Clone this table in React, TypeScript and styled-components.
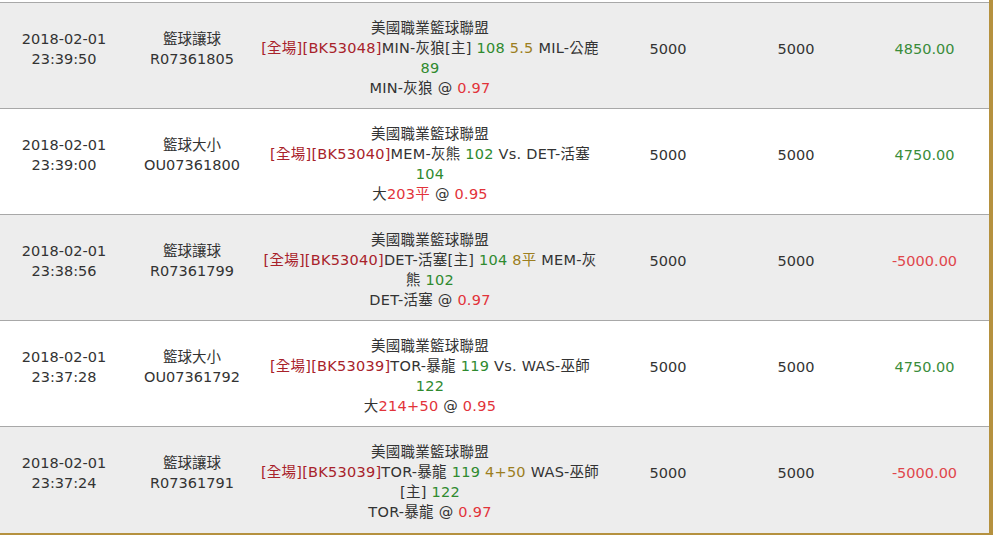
import React from "react";
import styled, { createGlobalStyle } from "styled-components";

const Global = createGlobalStyle`
  html, body { margin: 0; padding: 0; background: #fff; }
  body { font-family: "DejaVu Sans", "Noto Sans CJK TC", sans-serif; }
`;

const Frame = styled.div`
  width: 989px;
  padding-top: 2px;
  border-right: 4px solid #b5913f;
  border-bottom: 3px solid #b5913f;
  background: #fff;
`;

const Table = styled.table`
  width: 989px;
  border-collapse: collapse;
  table-layout: fixed;
  border-top: 1px solid #a8a8a8;
`;

const Row = styled.tr<{ $alt: boolean }>`
  background: ${(p) => (p.$alt ? "#ededed" : "#ffffff")};
  border-top: 1px solid #a8a8a8;
  &:first-child { border-top: none; }
`;

const Cell = styled.td<{ $trail?: boolean; $wide?: boolean }>`
  box-sizing: border-box;
  height: 106px;
  padding: ${(p) => (p.$trail ? "4px 0 18px" : "4px 0 0")};
  text-align: center;
  vertical-align: middle;
  font-size: 14.5px;
  line-height: 20px;
  letter-spacing: ${(p) => (p.$wide ? "0.25px" : "0")};
  color: #333;
  white-space: nowrap;
`;

const Line = styled.div`
  white-space: nowrap;
`;

type Tone = "dark" | "red" | "green" | "olive" | "plain";
const toneColor: Record<Tone, string> = {
  plain: "#333333",
  dark: "#a8222a",
  red: "#e2333a",
  green: "#2f8a2f",
  olive: "#9c7e20",
};

const Tint = styled.span<{ $tone: Tone }>`
  color: ${(p) => toneColor[p.$tone]};
`;

const Amount = styled.span<{ $neg: boolean }>`
  color: ${(p) => (p.$neg ? "#e0464b" : "#3a8c3a")};
`;

type Seg = [Tone, string];
type Bet = {
  date: string;
  time: string;
  kind: string;
  code: string;
  lines: Seg[][];
  stake: string;
  valid: string;
  result: string;
};

const league: Seg[] = [["plain", "美國職業籃球聯盟"]];

const bets: Bet[] = [
  {
    date: "2018-02-01",
    time: "23:39:50",
    kind: "籃球讓球",
    code: "R07361805",
    lines: [
      league,
      [["dark", "[全場][BK53048]"], ["plain", "MIN-灰狼[主] "], ["green", "108"], ["plain", " "], ["olive", "5.5"], ["plain", " MIL-公鹿"]],
      [["green", "89"]],
      [["plain", "MIN-灰狼 @ "], ["red", "0.97"]],
    ],
    stake: "5000",
    valid: "5000",
    result: "4850.00",
  },
  {
    date: "2018-02-01",
    time: "23:39:00",
    kind: "籃球大小",
    code: "OU07361800",
    lines: [
      league,
      [["dark", "[全場][BK53040]"], ["plain", "MEM-灰熊 "], ["green", "102"], ["plain", " Vs. DET-活塞"]],
      [["green", "104"]],
      [["plain", "大"], ["red", "203平"], ["plain", " @ "], ["red", "0.95"]],
    ],
    stake: "5000",
    valid: "5000",
    result: "4750.00",
  },
  {
    date: "2018-02-01",
    time: "23:38:56",
    kind: "籃球讓球",
    code: "R07361799",
    lines: [
      league,
      [["dark", "[全場][BK53040]"], ["plain", "DET-活塞[主] "], ["green", "104"], ["plain", " "], ["olive", "8平"], ["plain", " MEM-灰"]],
      [["plain", "熊 "], ["green", "102"]],
      [["plain", "DET-活塞 @ "], ["red", "0.97"]],
    ],
    stake: "5000",
    valid: "5000",
    result: "-5000.00",
  },
  {
    date: "2018-02-01",
    time: "23:37:28",
    kind: "籃球大小",
    code: "OU07361792",
    lines: [
      league,
      [["dark", "[全場][BK53039]"], ["plain", "TOR-暴龍 "], ["green", "119"], ["plain", " Vs. WAS-巫師"]],
      [["green", "122"]],
      [["plain", "大"], ["red", "214+50"], ["plain", " @ "], ["red", "0.95"]],
    ],
    stake: "5000",
    valid: "5000",
    result: "4750.00",
  },
  {
    date: "2018-02-01",
    time: "23:37:24",
    kind: "籃球讓球",
    code: "R07361791",
    lines: [
      league,
      [["dark", "[全場][BK53039]"], ["plain", "TOR-暴龍 "], ["green", "119"], ["plain", " "], ["olive", "4+50"], ["plain", " WAS-巫師"]],
      [["plain", "[主] "], ["green", "122"]],
      [["plain", "TOR-暴龍 @ "], ["red", "0.97"]],
    ],
    stake: "5000",
    valid: "5000",
    result: "-5000.00",
  },
];

export default function App() {
  return (
    <>
      <Global />
      <Frame>
        <Table>
          <colgroup>
            <col style={{ width: 128 }} />
            <col style={{ width: 128 }} />
            <col style={{ width: 348 }} />
            <col style={{ width: 128 }} />
            <col style={{ width: 128 }} />
            <col style={{ width: 129 }} />
          </colgroup>
          <tbody>
            {bets.map((b, i) => (
              <Row key={b.code} $alt={i % 2 === 0}>
                <Cell $trail>
                  <Line>{b.date}</Line>
                  <Line>{b.time}</Line>
                </Cell>
                <Cell $trail>
                  <Line>{b.kind}</Line>
                  <Line>{b.code}</Line>
                </Cell>
                <Cell $wide>
                  {b.lines.map((segs, j) => (
                    <Line key={j}>
                      {segs.map(([tone, text], k) => (
                        <Tint key={k} $tone={tone}>
                          {text}
                        </Tint>
                      ))}
                    </Line>
                  ))}
                </Cell>
                <Cell $trail>{b.stake}</Cell>
                <Cell $trail>{b.valid}</Cell>
                <Cell $trail>
                  <Amount $neg={b.result.startsWith("-")}>{b.result}</Amount>
                </Cell>
              </Row>
            ))}
          </tbody>
        </Table>
      </Frame>
    </>
  );
}
